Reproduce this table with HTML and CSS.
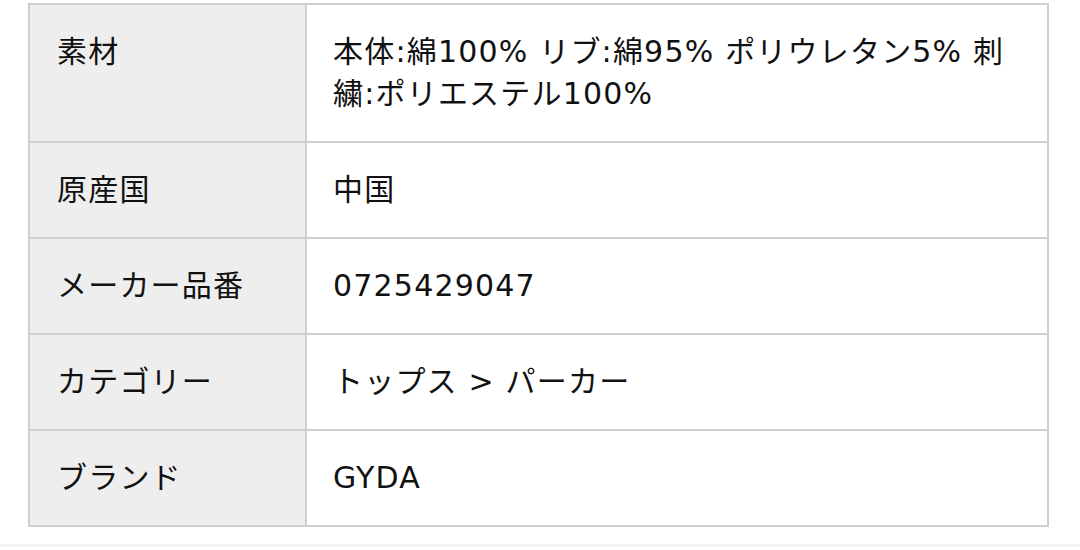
FILE: index.html
```html
<!DOCTYPE html>
<html lang="ja">
<head>
<meta charset="utf-8">
<link rel="stylesheet" href="styles.css">
</head>
<body>
<div class="wrap">
  <table class="spec">
    <tr><th>素材</th><td>本体:綿100% リブ:綿95% ポリウレタン5% 刺繍:ポリエステル100%</td></tr>
    <tr><th>原産国</th><td>中国</td></tr>
    <tr><th>メーカー品番</th><td>0725429047</td></tr>
    <tr><th>カテゴリー</th><td>トップス &gt; パーカー</td></tr>
    <tr><th>ブランド</th><td>GYDA</td></tr>
  </table>
</div>
<div class="divider"></div>
</body>
</html>
```
FILE: styles.css
```css
html, body {
  margin: 0;
  padding: 0;
  background: #fff;
}
body {
  font-family: "DejaVu Sans", "Noto Sans CJK JP", sans-serif;
  color: #111;
  width: 1080px;
  height: 550px;
  overflow: hidden;
}
.wrap {
  padding: 3px 31px 0 28px;
  height: 544px;
  box-sizing: border-box;
}
.spec {
  width: 100%;
  border-collapse: collapse;
  border: 2.5px solid #cfcfcf;
  table-layout: fixed;
}
.spec th, .spec td {
  border: 2.5px solid #cfcfcf;
  font-size: 30px;
  line-height: 42px;
  font-weight: 400;
  letter-spacing: 1.2px;
  text-align: left;
  vertical-align: top;
  padding: 26px 28px 26px 27px;
}
.spec th {
  width: 220px;
  background: #eeeeee;
}
.spec td {
  padding-left: 26px;
  padding-right: 10px;
}
.divider {
  height: 3px;
  background: #f2f2f2;
}
```
